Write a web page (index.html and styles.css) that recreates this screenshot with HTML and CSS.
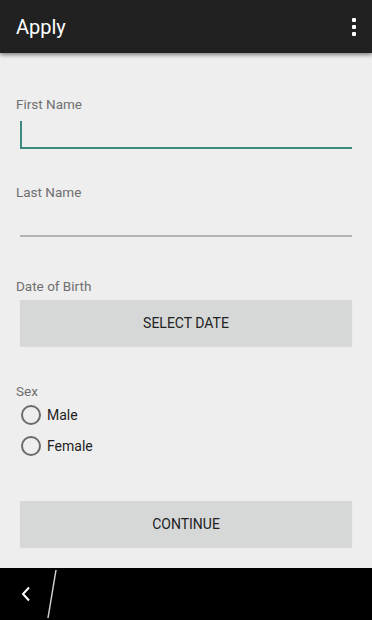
FILE: index.html
```html
<!DOCTYPE html>
<html lang="en">
<head>
    <meta charset="UTF-8">
    <meta name="viewport" content="width=device-width, initial-scale=1.0">
    <title>Apply</title>
    <link rel="stylesheet" href="styles.css">
</head>
<body>
    <!-- Action Bar -->
    <header class="action-bar">
        <h1 class="title">Apply</h1>
        <button class="overflow" aria-label="More options">
            <span></span><span></span><span></span>
        </button>
    </header>

    <!-- Form -->
    <main class="form">
        <div class="field">
            <label class="label" for="firstName">First Name</label>
            <div class="input focused">
                <span class="cursor"></span>
            </div>
        </div>

        <div class="field">
            <label class="label" for="lastName">Last Name</label>
            <div class="input"></div>
        </div>

        <div class="field field-dob">
            <label class="label">Date of Birth</label>
            <button class="flat-button">Select Date</button>
        </div>

        <div class="field field-sex">
            <label class="label">Sex</label>
            <div class="radio-row">
                <span class="radio"></span>
                <span class="radio-text">Male</span>
            </div>
            <div class="radio-row">
                <span class="radio"></span>
                <span class="radio-text">Female</span>
            </div>
        </div>

        <button class="flat-button continue">Continue</button>
    </main>

    <!-- Navigation Bar -->
    <footer class="nav-bar">
        <svg class="back" width="12" height="16" viewBox="0 0 12 16">
            <polyline points="9,1.5 3,8 9,14.5" fill="none" stroke="#fff" stroke-width="2"/>
        </svg>
        <svg class="slash" width="12" height="50" viewBox="0 0 12 50">
            <line x1="10" y1="0" x2="2" y2="48" stroke="#cfcfcf" stroke-width="1.5"/>
        </svg>
    </footer>
</body>
</html>
```

FILE: styles.css
```css
body {
    margin: 0;
    padding: 0;
    font-family: Roboto, "Liberation Sans", sans-serif;
    background: #eeeeee;
    height: 620px;
    display: flex;
    flex-direction: column;
    overflow: hidden;
}

.action-bar {
    height: 53px;
    background: #212121;
    display: flex;
    align-items: center;
    justify-content: space-between;
    padding: 0 16px 0 16px;
    box-shadow: 0 2px 4px rgba(0, 0, 0, 0.45);
    position: relative;
    z-index: 2;
    flex-shrink: 0;
}

.title {
    margin: 0;
    font-size: 20px;
    font-weight: 400;
    color: #ffffff;
}

.overflow {
    background: none;
    border: none;
    padding: 0;
    display: flex;
    flex-direction: column;
    gap: 3px;
}

.overflow span {
    width: 4px;
    height: 4px;
    background: #ffffff;
    border-radius: 1px;
}

.form {
    flex: 1;
    padding: 43px 20px 0 16px;
}

.field {
    display: flex;
    flex-direction: column;
}

.label {
    font-size: 13.5px;
    line-height: 16px;
    color: #6e6e6e;
}

.input {
    margin-left: 4px;
    height: 35px;
    border-bottom: 2px solid #b4b4b4;
    margin-bottom: 35px;
    position: relative;
}

.input.focused {
    border-bottom-color: #3d8b80;
}

.cursor {
    position: absolute;
    left: 0;
    top: 9px;
    width: 2px;
    height: 26px;
    background: #3d8b80;
}

.field-dob {
    margin-top: 6px;
}

.flat-button {
    margin-left: 4px;
    height: 46px;
    border: none;
    background: #d6d8d8;
    box-shadow: 0 1px 1px rgba(0, 0, 0, 0.08);
    font-family: Roboto, "Liberation Sans", sans-serif;
    font-size: 14px;
    text-transform: uppercase;
    color: #222222;
    margin-top: 6px;
}

.field-sex {
    margin-top: 37px;
}

.radio-row {
    display: flex;
    align-items: center;
    gap: 6px;
    height: 31px;
    margin-left: 5px;
}

.radio {
    width: 16px;
    height: 16px;
    border: 2px solid #6b6b6b;
    border-radius: 50%;
}

.radio-text {
    font-size: 14px;
    color: #1e1e1e;
}

.continue {
    width: calc(100% - 4px);
    margin-top: 40px;
}

.nav-bar {
    height: 52px;
    background: #000000;
    display: flex;
    align-items: center;
    padding-left: 20px;
    gap: 14px;
    flex-shrink: 0;
}

.slash {
    margin-top: 2px;
}
```
